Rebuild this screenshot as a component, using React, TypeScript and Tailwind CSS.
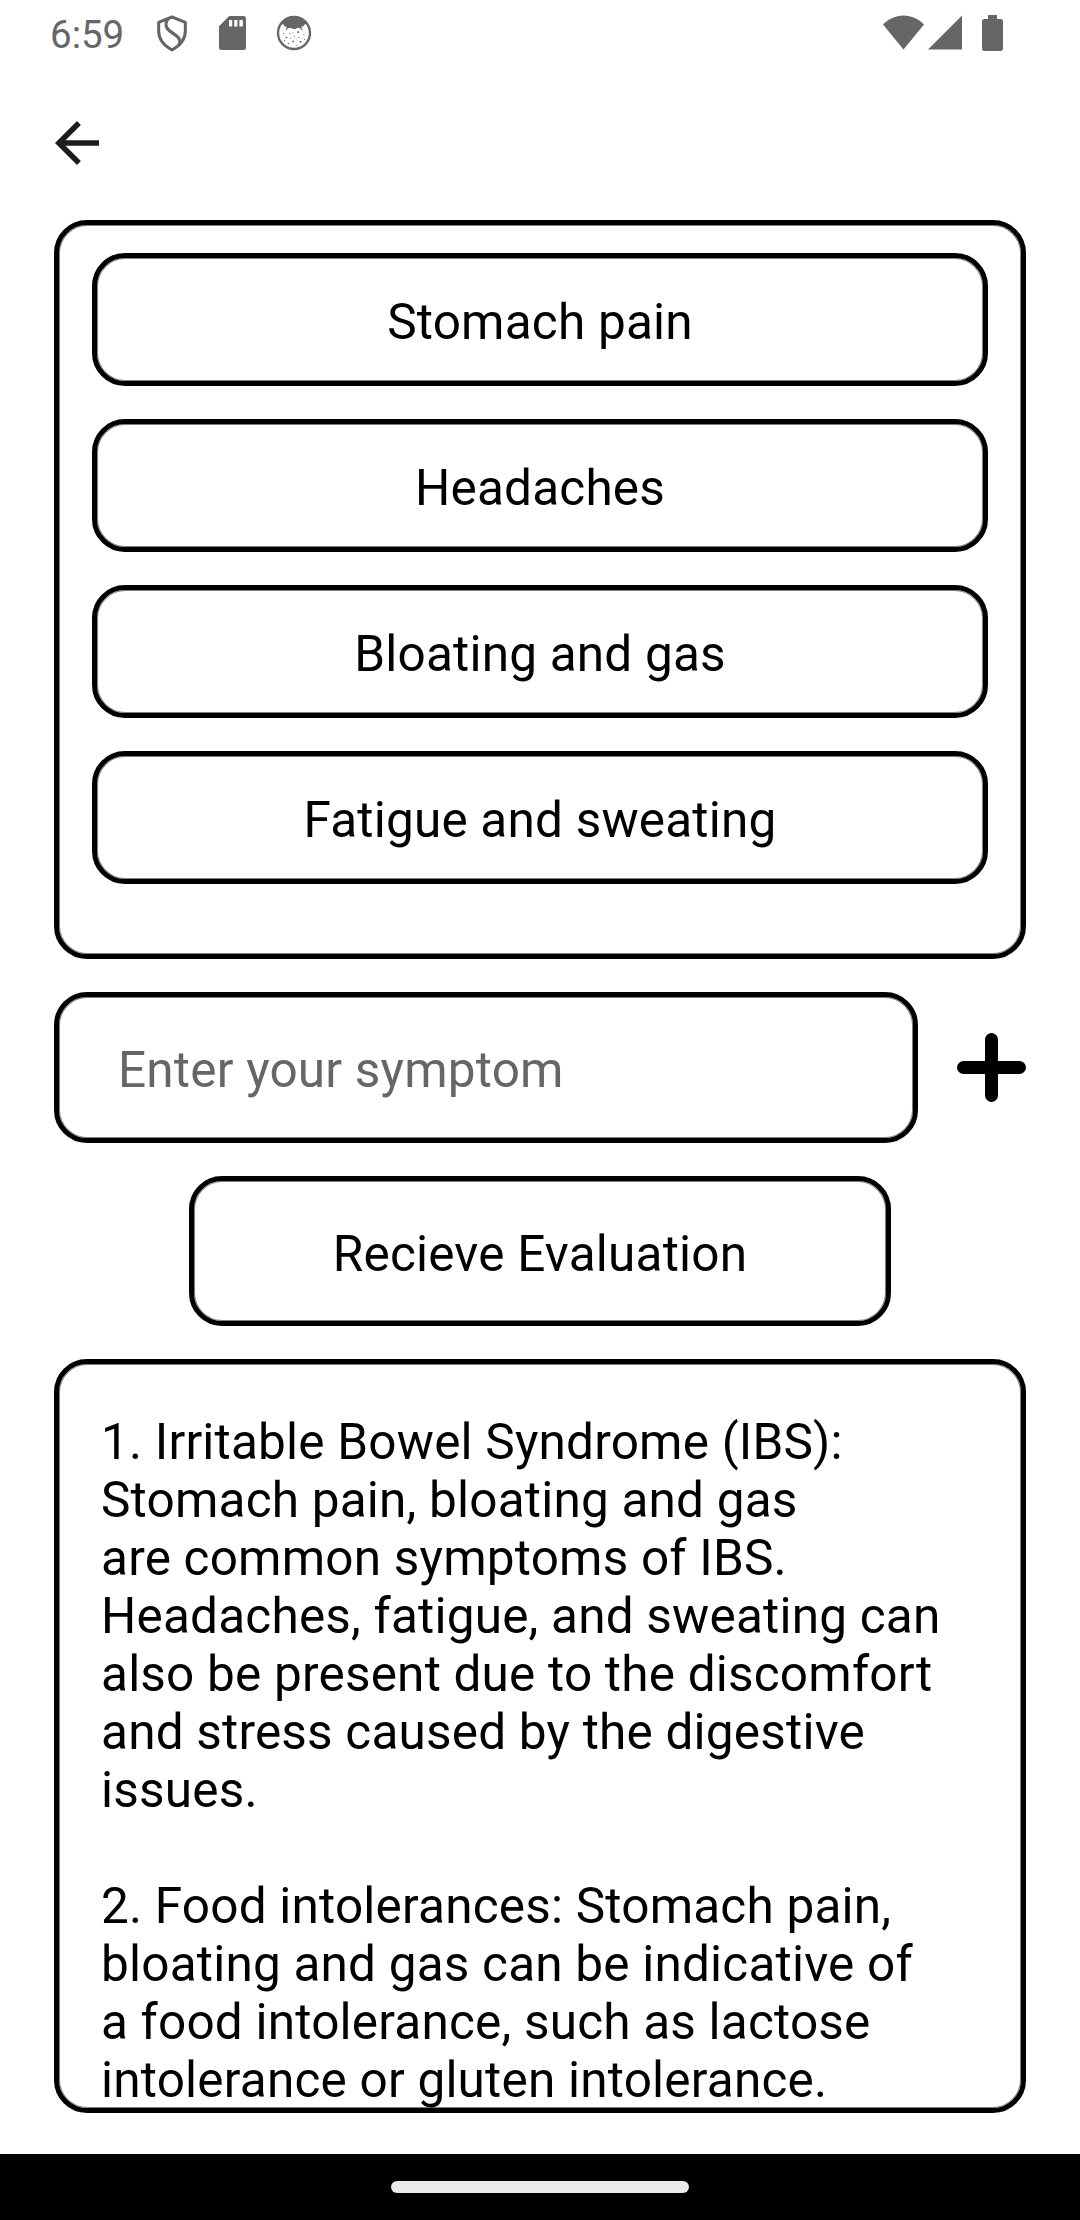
import React, { useState } from "react";

const symptoms = ["Stomach pain", "Headaches", "Bloating and gas", "Fatigue and sweating"];

const evaluation = [
  "1. Irritable Bowel Syndrome (IBS):",
  "Stomach pain, bloating and gas",
  "are common symptoms of IBS.",
  "Headaches, fatigue, and sweating can",
  "also be present due to the discomfort",
  "and stress caused by the digestive",
  "issues.",
  "",
  "2. Food intolerances: Stomach pain,",
  "bloating and gas can be indicative of",
  "a food intolerance, such as lactose",
  "intolerance or gluten intolerance.",
];

const outline =
  "rounded-[33px] border-5 border-black shadow-[inset_0_0_0_1px_rgba(0,0,0,0.5)] text-[49.5px] leading-[58px] tracking-[0.2px] text-black";

function ShieldIcon() {
  return (
    <svg className="ml-[32px] h-[38px] w-[32px]" viewBox="376 42 96 114" fill="none" stroke="currentColor" strokeWidth="9">
      <path d="M424 51L464 67V94C464 118 446 138 424 150C402 138 384 118 384 94V67Z" strokeLinejoin="round" />
      <path d="M411 57C404 68 404 82 415 91L438 108C449 117 451 127 444 135" strokeWidth="10" />
    </svg>
  );
}

function SdIcon() {
  return (
    <svg className="ml-[31px] h-[34px] w-[27px]" viewBox="0 0 27 34" fill="currentColor">
      <path
        fillRule="evenodd"
        d="M10.2 0H24.5Q27 0 27 2.5V31.5Q27 34 24.5 34H2.5Q0 34 0 31.5V10.2ZM10 4V10.5H13.2V4ZM15.2 4V10.5H18.4V4ZM20.4 4V10.5H23.8V4Z"
      />
    </svg>
  );
}

function FaceIcon() {
  return (
    <svg className="ml-[30px] h-[36px] w-[36px]" viewBox="736 46 108 108" fill="currentColor">
      <circle cx="790" cy="100" r="48" fill="none" stroke="currentColor" strokeWidth="7" />
      <path d="M748 76C760 58 775 49 790 49S820 58 832 76L823 73L819 79L812 82L816 95L808 86L801 84Q790 92 779 84L772 86L765 95L768 82L761 79L757 73Z" />
      <path d="M765 111h5v5h-5zM800 95h5v5h-5zM785 123h5v5h-5zM807 124h5v5h-5zM818 104h3v3h-3zM776 100h3v3h-3zM790 108h3v3h-3zM757 100h3v3h-3zM772 130h3v3h-3zM797 135h3v3h-3zM820 118h3v3h-3zM803 112h3v3h-3zM779 114h3v3h-3zM760 122h3v3h-3zM786 98h2v2h-2zM796 120h2v2h-2z" />
    </svg>
  );
}

function StatusBar() {
  return (
    <header className="flex h-[66px] items-center pl-[50px] pr-[77px] text-[#666666]">
      <span className="w-[74px] whitespace-nowrap pt-1 text-[38.5px] leading-[62px]">6:59</span>
      <ShieldIcon />
      <SdIcon />
      <FaceIcon />
      <svg className="mb-px ml-auto h-[35px] w-[41px]" viewBox="0 0 41 35" fill="currentColor">
        <path d="M0 9.5C5.5 4 12.5 0.5 20.5 0.5S35.5 4 41 9.5L20.5 34.5Z" />
      </svg>
      <svg className="mb-px ml-1 h-[35px] w-[34px]" viewBox="0 0 34 35" fill="currentColor">
        <path d="M34 0.5V34.5H0Z" />
      </svg>
      <svg className="ml-[20px] h-[36px] w-[21px]" viewBox="0 0 21 36" fill="currentColor">
        <path d="M6 0H15V4H18.5Q21 4 21 6.5V33.5Q21 36 18.5 36H2.5Q0 36 0 33.5V6.5Q0 4 2.5 4H6Z" />
      </svg>
    </header>
  );
}

export default function App() {
  const [value, setValue] = useState("");
  return (
    <div className="flex h-[2220px] w-[1080px] flex-col overflow-hidden bg-white font-['Roboto',sans-serif]">
      <StatusBar />
      <div className="flex h-[154px] items-start pl-[44px] pt-[44px]">
        <button aria-label="Back">
          <svg className="block size-[66px]" viewBox="0 0 24 24" fill="#1c1b1f">
            <path d="M20 11H7.83l5.59-5.59L12 4l-8 8 8 8 1.41-1.41L7.83 13H20z" />
          </svg>
        </button>
      </div>
      <main className="flex flex-1 flex-col gap-[33px] px-[54px]">
        <ul className={`flex h-[739px] flex-col gap-[33px] px-[33px] pt-[28px] ${outline}`}>
          {symptoms.map((s) => (
            <li key={s} className={`flex h-[133px] items-center justify-center pt-[5px] ${outline}`}>
              {s}
            </li>
          ))}
        </ul>
        <div className="flex h-[151px] items-center justify-between">
          <input
            className={`h-[151px] w-[864px] pl-[59px] pt-[5px] outline-none placeholder:text-[#666666] placeholder:opacity-100 ${outline}`}
            placeholder="Enter your symptom"
            value={value}
            onChange={(e) => setValue(e.target.value)}
          />
          <button aria-label="Add symptom">
            <svg className="block size-[69px]" viewBox="0 0 69 69" stroke="black" strokeWidth="13" strokeLinecap="round">
              <path d="M34.5 6.5V62.5M6.5 34.5H62.5" />
            </svg>
          </button>
        </div>
        <button className={`h-[150px] w-[702px] self-center pt-[6px] ${outline}`}>Recieve Evaluation</button>
        <section className={`h-[754px] overflow-hidden pl-[42px] pt-[49px] ${outline}`}>
          {evaluation.map((line, i) => (
            <p key={i} className="h-[58px] whitespace-nowrap">
              {line}
            </p>
          ))}
        </section>
      </main>
      <footer className="flex h-[66px] items-center justify-center bg-black">
        <div className="h-[12px] w-[298px] rounded-full bg-[#ebebeb]" />
      </footer>
    </div>
  );
}
